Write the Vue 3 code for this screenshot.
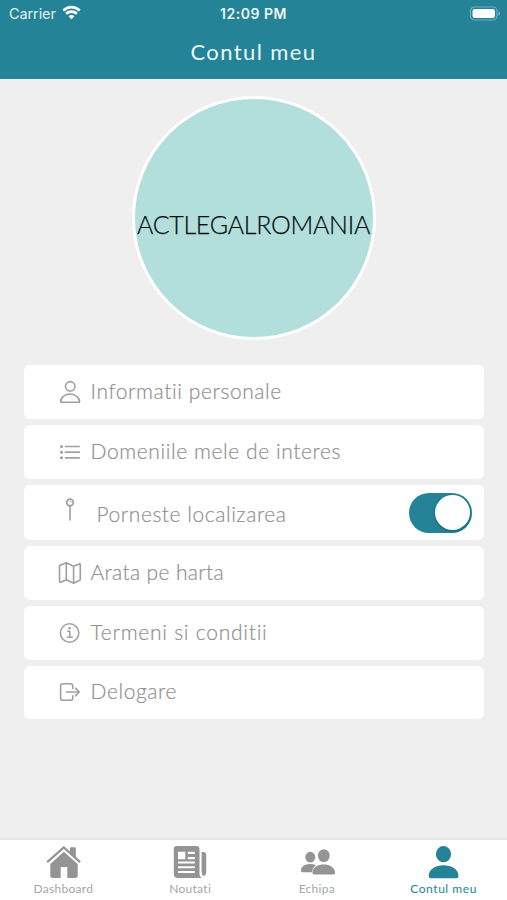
<script setup>
import { ref } from 'vue'

const located = ref(true)
const rows = [
  { id: 'person', label: 'Informatii personale' },
  { id: 'list', label: 'Domeniile mele de interes' },
  { id: 'pin', label: 'Porneste localizarea' },
  { id: 'map', label: 'Arata pe harta' },
  { id: 'info', label: 'Termeni si conditii' },
  { id: 'logout', label: 'Delogare' },
]
const tabs = [
  { id: 'home', label: 'Dashboard' },
  { id: 'news', label: 'Noutati' },
  { id: 'team', label: 'Echipa' },
  { id: 'account', label: 'Contul meu' },
]
</script>

<template>
  <div class="screen">
    <header class="header">
      <div class="status">
        <div class="carrier">
          <span>Carrier</span>
          <svg width="19" height="15" viewBox="0 0 19 15" fill="none" stroke="#fff" stroke-width="2.7">
            <path d="M1.3 5.5C5.9.9 13.1.9 17.7 5.5" />
            <path d="M4.1 8.8c2.9-2.8 7.9-2.8 10.8 0" />
            <path d="M6.5 11.2c1.7-1.5 4.3-1.5 6 0L9.5 14.3Z" fill="#fff" stroke="none" />
          </svg>
        </div>
        <span class="clock">12:09 PM</span>
        <svg class="battery" width="32" height="15" viewBox="0 0 32 15">
          <rect x="1.5" y="1" width="26.5" height="13" rx="4" fill="none" stroke="#6fafbc" stroke-width="1.2" />
          <rect x="3.5" y="3" width="22.5" height="9" rx="2.2" fill="#fff" />
          <path d="M29.4 5.2c2.2.8 2.2 3.8 0 4.6Z" fill="#6fafbc" />
        </svg>
      </div>
      <h1 class="title">Contul meu</h1>
    </header>

    <main class="content">
      <div class="avatar"><span>ACTLEGALROMANIA</span></div>
      <div class="rows">
        <div v-for="row in rows" :key="row.id" class="row" :class="row.id">
          <svg class="icon" width="24" height="24" viewBox="0 0 24 24" fill="none" stroke="#a0a0a0" stroke-width="1.6" stroke-linecap="round" stroke-linejoin="round">
            <template v-if="row.id === 'person'">
              <circle cx="12.2" cy="6.3" r="4.7" />
              <path d="M2.7 22.2c-.6-4.8 4.6-8.2 9.3-8.2s10 3.4 9.5 8.2Z" />
            </template>
            <template v-else-if="row.id === 'list'">
              <path d="M7.5 6.5h13.7M7.5 12.2h13.7M7.5 17.8h13.7" stroke-width="1.7" />
              <path d="M3.5 6.5h.1M3.5 12.2h.1M3.5 17.8h.1" stroke-width="3" />
            </template>
            <template v-else-if="row.id === 'pin'">
              <circle cx="12" cy="4.5" r="3.3" stroke-width="1.7" />
              <path d="M12 8v14" />
              <path d="M12.2 3.3a1.2 1.2 0 0 1 1 1" stroke-width="1" />
            </template>
            <template v-else-if="row.id === 'map'">
              <path d="M1.5 4.4 8.3 1.8l7.3 3.5 5.6-2.4q1.1-.4 1.1.8v14.7q0 .6-.7.9l-6 2.9-7.3-3.5-5.7 2.5q-1.1.4-1.1-.8ZM8.3 1.8v16.9M15.6 5.3v16.9" />
            </template>
            <template v-else-if="row.id === 'info'">
              <circle cx="11.6" cy="12" r="9.2" />
              <path d="M9.7 10.3h2.1v5.8M9.4 16.3h4.8" stroke-width="1.6" />
              <circle cx="11.6" cy="7.3" r="1.3" fill="#a0a0a0" stroke="none" />
            </template>
            <template v-else>
              <path d="M14.8 8.4V6.1q0-2.4-2.4-2.4H5q-2.4 0-2.4 2.4v11.8q0 2.4 2.4 2.4h7.4q2.4 0 2.4-2.4v-2.2M8.6 12h12.6M17.7 8.4l3.6 3.6-3.6 3.6" />
            </template>
          </svg>
          <span class="label">{{ row.label }}</span>
          <button v-if="row.id === 'pin'" class="toggle" :class="{ on: located }" @click="located = !located"><span class="knob"></span></button>
        </div>
      </div>
    </main>

    <nav class="tabs">
      <div v-for="tab in tabs" :key="tab.id" class="tab" :class="tab.id">
        <svg width="36" height="34" viewBox="0 0 36 34" fill="currentColor">
          <template v-if="tab.id === 'home'">
            <path d="M24.9 2.2q0-1 1-1h3.9q1 0 1 1v11L24.9 7.4Z" />
            <path d="M2.2 16.1 18.8 1.4l16.3 14.7" fill="none" stroke="currentColor" stroke-width="2.2" />
            <path d="M18.8 5.7 32.7 18v12q0 2-2 2H22.3V21h-6.6v11H7.3q-2 0-2-2V18Z" />
          </template>
          <template v-else-if="tab.id === 'news'">
            <path fill-rule="evenodd" d="M4.5 0h20q3 0 3 3v25q0 2.8 2 4H6Q1.8 32 1.8 28V3q0-3 2.7-3ZM6 5.8v7.4h7.3V5.8ZM15.8 5.8v2.1h7V5.8ZM15.8 11.1v2.1h7v-2.1ZM6 15.5v2.1h16.8v-2.1ZM6 20.2v2.1h16.8v-2.1ZM6 24.9V27h16.8v-2.1Z" />
            <path d="M29.6 6h2q2.6 0 2.6 2.8v17.4q0 3-2.3 3.8-2.3-.8-2.3-3.8Z" />
          </template>
          <template v-else-if="tab.id === 'team'">
            <ellipse cx="11.3" cy="11.2" rx="5" ry="5.4" />
            <ellipse cx="24.8" cy="9.6" rx="5.9" ry="6.4" />
            <path d="M2 24.4c0-4.5 5-6.5 9.4-6.5 2.1 0 4 .5 5.5 1.3-2.2 1.7-3.6 4-3.8 7H3.2Q1.9 26.1 2 24.4Z" />
            <path d="M13.5 26.7c0-5.6 5.8-8.2 11.2-8.2S36 21.1 36 26.7q0 1.9-1.7 1.9H15.2q-1.7 0-1.7-1.9Z" />
          </template>
          <template v-else>
            <ellipse cx="17.5" cy="8.2" rx="7.6" ry="8.1" />
            <path d="M2.7 29.7C2.7 23 10 19.2 17.5 19.2s15 3.8 15 10.5q0 2.6-2 2.6H4.7q-2 0-2-2.6Z" />
          </template>
        </svg>
        <span>{{ tab.label }}</span>
      </div>
    </nav>
  </div>
</template>

<style>
body { margin: 0; background: #efefef; }
</style>

<style scoped>
.screen { width: 507px; height: 900px; display: flex; flex-direction: column; background: #efefef; font-family: Lato, sans-serif; overflow: hidden; }
.header { height: 79px; background: #248397; color: #fff; flex-shrink: 0; }
.status { height: 27px; display: grid; grid-template-columns: 1fr auto 1fr; align-items: center; padding: 0 6px 0 9px; font-family: Inter, sans-serif; font-size: 14.5px; }
.carrier { display: flex; align-items: center; gap: 6px; color: #e1f0f3; letter-spacing: -.1px; }
.carrier svg { margin-top: -2px; }
.clock { font-weight: 600; font-size: 14px; letter-spacing: .5px; color: #edf6f8; margin-right: 3px; }
.battery { justify-self: end; }
.title { margin: 0; line-height: 49px; font-size: 22px; font-weight: 400; text-align: center; letter-spacing: 1.4px; color: #e9f7f9; }
.content { flex: 1; display: flex; flex-direction: column; align-items: center; padding-top: 17px; }
.avatar { width: 238px; height: 238px; border: 3px solid #fff; border-radius: 50%; background: #b2dfdb; display: flex; align-items: center; justify-content: center; flex-shrink: 0; }
.avatar span { font-size: 25px; font-weight: 300; color: #080e0f; white-space: nowrap; letter-spacing: -.27px; padding-top: 11px; -webkit-text-stroke: .25px currentColor; }
.rows { width: 460px; margin-top: 25px; display: flex; flex-direction: column; gap: 6px; }
.row { height: 54px; box-sizing: border-box; display: flex; align-items: center; padding: 0 12px 0 34px; background: #fff; border-radius: 6px; }
.row.pin { height: 55px; }
.row.map, .row.info, .row.logout { height: 53.8px; }
.icon { flex-shrink: 0; margin-right: 9px; }
.pin .icon { margin-bottom: 5px; margin-right: 15px; }
.label { font-size: 21px; line-height: 28px; font-weight: 300; color: #909090; letter-spacing: .59px; white-space: nowrap; margin-top: -2px; -webkit-text-stroke: .2px currentColor; }
.pin .label { margin-top: 2px; letter-spacing: .55px; }
.map .label { letter-spacing: .35px; }
.info .label { letter-spacing: .75px; }
.toggle { width: 63px; height: 40px; margin-left: auto; border: 0; border-radius: 20px; padding: 2px; display: flex; background: #c5c5c5; }
.toggle.on { justify-content: flex-end; background: #248397; }
.knob { width: 35px; height: 35px; border-radius: 50%; background: #fff; box-shadow: 0 1px 3px rgba(0, 40, 50, .4); }
.tabs { height: 62px; box-sizing: border-box; border-top: 2px solid #e5e5e5; background: #fff; display: grid; grid-template-columns: repeat(4, 1fr); flex-shrink: 0; }
.tab { display: flex; flex-direction: column; align-items: center; padding-top: 6px; color: #949494; }
.tab span { font-size: 12px; line-height: 16px; margin-top: 1px; color: #a6a6a6; letter-spacing: .3px; }
.tab.account, .tab.account span { color: #248397; }
.tab.account span { letter-spacing: .55px; }
</style>
